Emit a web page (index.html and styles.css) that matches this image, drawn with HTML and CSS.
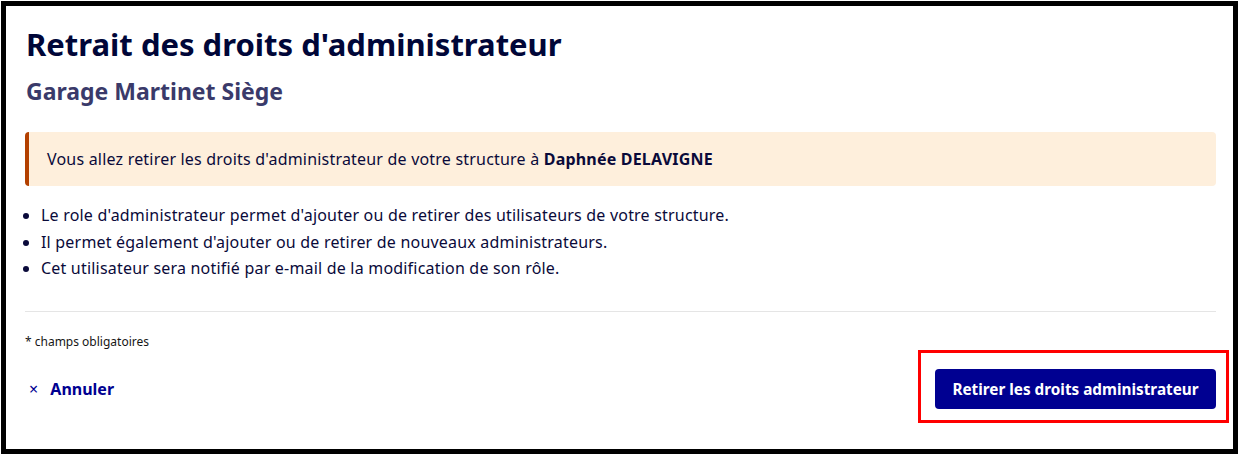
FILE: index.html
```html
<!DOCTYPE html>
<html>
    <head>
        <meta charset="UTF-8" />
        <title>Retrait des droits d'administrateur</title>
        <link rel="stylesheet" href="styles.css">
    </head>
    <body>
        <div class="modal">
            <h1 class="title">Retrait des droits d'administrateur</h1>
            <h2 class="subtitle">Garage Martinet Siège</h2>

            <div class="alert">
                <p>Vous allez retirer les droits d'administrateur de votre structure à <b>Daphnée DELAVIGNE</b></p>
            </div>

            <ul class="infoList">
                <li>Le role d'administrateur permet d'ajouter ou de retirer des utilisateurs de votre structure.</li>
                <li>Il permet également d'ajouter ou de retirer de nouveaux administrateurs.</li>
                <li>Cet utilisateur sera notifié par e-mail de la modification de son rôle.</li>
            </ul>

            <hr class="separator" />

            <p class="mandatory">* champs obligatoires</p>

            <div class="actions">
                <button type="button" class="cancelBtn"><span class="cross">×</span> Annuler</button>
                <span class="highlight">
                    <button type="submit" class="submitBtn">Retirer les droits administrateur</button>
                </span>
            </div>
        </div>
    </body>
</html>
```

FILE: styles.css
```css
html, body {
    margin: 0;
    padding: 0;
    background: #fff;
}
body {
    font-family: "Noto Sans", "Open Sans", sans-serif;
    color: #161616;
}
.modal {
    box-sizing: border-box;
    margin: 1px 2px 2px 1px;
    height: 453px;
    border: 5px solid #000;
    padding: 0 17px 0 19px;
}
.title {
    margin: 18px 0 0 1px;
    font-size: 31px;
    line-height: 40px;
    font-weight: 700;
    color: #000638;
}
.subtitle {
    margin: 12px 0 0 1px;
    font-size: 23px;
    line-height: 30px;
    font-weight: 700;
    color: #3a3a6a;
}
.alert {
    margin-top: 26px;
    height: 54px;
    display: flex;
    align-items: center;
    padding-left: 18px;
    background: #feefdc;
    border-left: 4px solid #b34000;
    border-radius: 4px;
    font-size: 16px;
    letter-spacing: 0.2px;
    color: #0a0a3a;
}
.alert p {
    margin: 0;
}
.alert b {
    font-weight: 700;
}
.infoList {
    margin: 16px 0 0 0;
    padding-left: 16px;
    font-size: 16px;
    letter-spacing: 0.2px;
    line-height: 26.5px;
    color: #0a0a3a;
}
.separator {
    margin: 29px 0 0 0;
    border: none;
    border-top: 1px solid #e5e5e5;
}
.mandatory {
    margin: 22px 0 0 0;
    font-size: 12px;
    line-height: 16px;
    color: #161616;
}
.actions {
    margin-top: 19px;
    display: flex;
    justify-content: space-between;
    align-items: center;
}
.cancelBtn {
    border: none;
    background: none;
    padding: 0 0 0 4px;
    font-family: inherit;
    font-size: 16px;
    font-weight: 700;
    color: #000091;
}
.cross {
    font-weight: 400;
    margin-right: 8px;
}
.highlight {
    position: relative;
    display: flex;
}
.highlight::after {
    content: "";
    position: absolute;
    left: -17px;
    top: -19px;
    right: -13px;
    bottom: -14px;
    border: 3px solid #ff0000;
}
.submitBtn {
    width: 281px;
    height: 40px;
    border: none;
    border-radius: 4px;
    background: #000091;
    color: #fff;
    font-family: inherit;
    font-size: 15.3px;
    font-weight: 700;
}
```
